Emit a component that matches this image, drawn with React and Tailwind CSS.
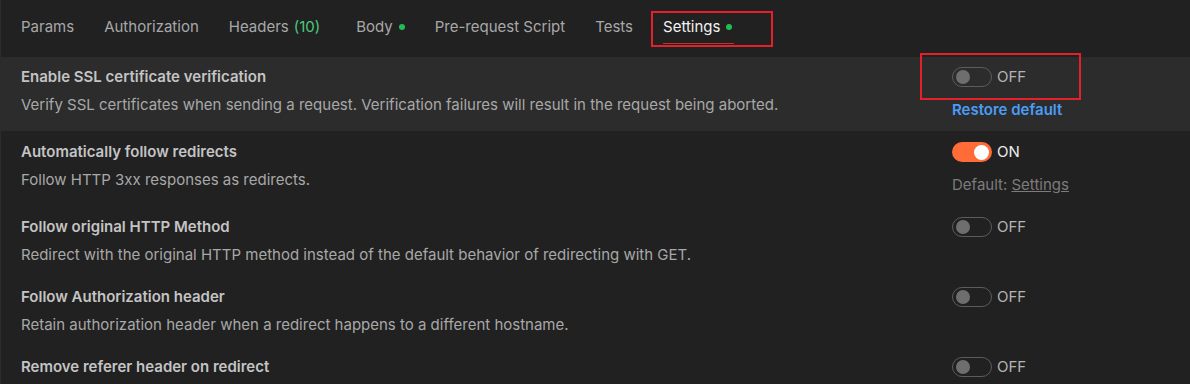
import React from "react";

const tabs = [
  { label: "Params" },
  { label: "Authorization" },
  { label: "Headers", count: "(10)", gap: "mr-[36px]" },
  { label: "Body", dot: true },
  { label: "Pre-request Script" },
  { label: "Tests" },
  { label: "Settings", dot: true, active: true },
];

const Toggle = ({ on }) => (
  <div className="flex items-center gap-[5px] h-[20px]">
    {on ? (
      <div className="w-[40px] h-[20px] rounded-full bg-[#ff6c37] flex items-center justify-end pr-[3px]">
        <div className="w-[15px] h-[15px] rounded-full bg-white" />
      </div>
    ) : (
      <div className="w-[40px] h-[20px] rounded-full border border-[#5c5c5c] flex items-center pl-[3px]">
        <div className="w-[14px] h-[14px] rounded-full bg-[#6e6e6e]" />
      </div>
    )}
    <span className={"text-[15px] leading-[20px] " + (on ? "text-[#ececec]" : "text-[#b3b3b3]")}>
      {on ? "ON" : "OFF"}
    </span>
  </div>
);

const Row = ({ title, desc, on, extra, highlight, pad }) => (
  <div className={"flex pl-[20px] " + (highlight ? "bg-[#2c2c2c] " : "") + pad}>
    <div className="flex-1">
      <div className="text-[15px] leading-[20px] font-semibold text-[#c4c4c4]">{title}</div>
      {desc && (
        <div className="text-[15px] leading-[20px] mt-[8px] text-[#a8a8a8]">{desc}</div>
      )}
    </div>
    <div className="w-[238px] flex flex-col">
      <Toggle on={on} />
      {extra}
    </div>
  </div>
);

export default function App() {
  return (
    <div
      className="w-[1190px] h-[384px] overflow-hidden bg-[#212121] relative border-l border-[#2c2c2c]"
      style={{ fontFamily: "Inter, 'Noto Sans', sans-serif" }}
    >
      <div className="h-[57px] flex items-start pl-[20px] pt-[17px]">
        {tabs.map((t, i) => (
          <div
            key={i}
            className={
              "relative flex items-center text-[15px] leading-[20px] " +
              (t.gap || "mr-[30px] ") +
              " " +
              (t.active ? "text-[#f2f2f2]" : "text-[#a8a8a8]")
            }
          >
            <span>{t.label}</span>
            {t.count && <span className="ml-[5px] text-[#4cc97a]">{t.count}</span>}
            {t.dot && <span className="ml-[6px] w-[6px] h-[6px] rounded-full bg-[#1fbd54]" />}
            {t.active && (
              <div className="absolute left-0 right-[-2px] top-[26px] h-[1px] bg-[#c0322b]" />
            )}
          </div>
        ))}
      </div>

      <Row
        highlight
        pad="pt-[10px] pb-[11px]"
        title="Enable SSL certificate verification"
        desc="Verify SSL certificates when sending a request. Verification failures will result in the request being aborted."
        on={false}
        extra={
          <div className="mt-[13px] text-[15px] leading-[20px] font-semibold text-[#4b9cf7]">
            Restore default
          </div>
        }
      />
      <Row
        pad="pt-[11px] pb-[11px]"
        title="Automatically follow redirects"
        desc="Follow HTTP 3xx responses as redirects."
        on
        extra={
          <div className="mt-[13px] text-[15px] leading-[20px] text-[#7c7c7c]">
            Default: <span className="underline">Settings</span>
          </div>
        }
      />
      <Row
        pad="pt-[11px] pb-[11px]"
        title="Follow original HTTP Method"
        desc="Redirect with the original HTTP method instead of the default behavior of redirecting with GET."
        on={false}
      />
      <Row
        pad="pt-[11px] pb-[11px]"
        title="Follow Authorization header"
        desc="Retain authorization header when a redirect happens to a different hostname."
        on={false}
      />
      <Row
        pad="pt-[11px] pb-[11px]"
        title="Remove referer header on redirect"
        on={false}
      />

      <div className="absolute left-[650px] top-[11px] w-[122px] h-[36px] border-2 border-[#e5202a]" />
      <div className="absolute left-[919px] top-[53px] w-[161px] h-[47px] border-2 border-[#e5202a]" />
    </div>
  );
}
